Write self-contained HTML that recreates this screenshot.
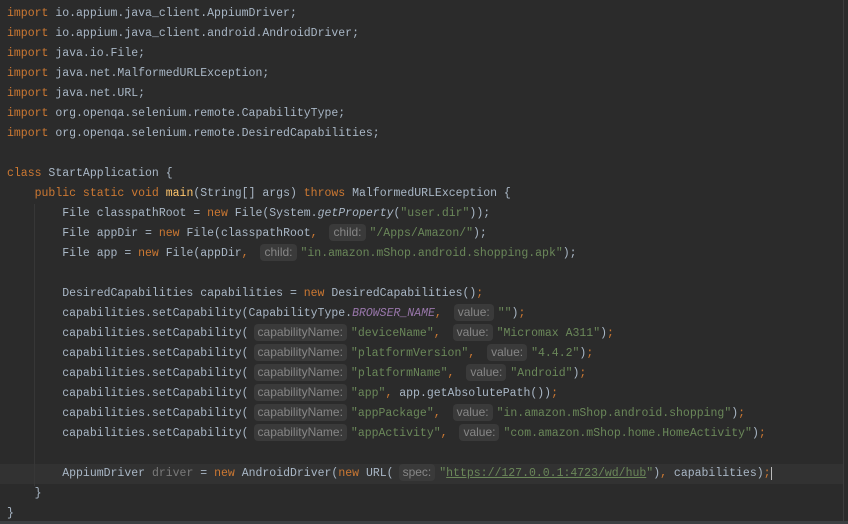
<!DOCTYPE html>
<html><head><style>
html,body{margin:0;padding:0;}
body{width:848px;height:524px;background:#2b2b2b;position:relative;overflow:hidden;font-family:"Liberation Mono",monospace;font-size:11.5px;color:#a9b7c6;}
.l{position:absolute;left:7px;height:20px;line-height:20px;white-space:pre;margin-top:1px}
.k{color:#cc7832}.s{color:#6a8759}.m{color:#ffc66d}.f{color:#9876aa;font-style:italic}.i{font-style:italic}
.h{display:inline-block;background:#3a3a3a;color:#868686;font-family:"Liberation Sans",sans-serif;font-size:12px;line-height:17px;padding:0 4px;border-radius:4px;margin:0 4px 0 5px;vertical-align:0px}
.g{color:#7a7a7a}
.cur{position:absolute;left:0;top:464px;width:843px;height:20px;background:#323232}
.guide{position:absolute;width:1px;background:#373737}
</style></head><body>
<div class="cur"></div>
<div class="guide" style="left:34px;top:204px;height:282px"></div>
<div class="guide" style="left:843px;top:0;height:524px;background:#3c3c3c"></div>
<div style="position:absolute;left:0;top:521px;width:848px;height:3px;background:#3c3f41"></div>
<div class="l" style="top:3px"><span class="k">import</span> io.appium.java_client.AppiumDriver;</div>
<div class="l" style="top:23px"><span class="k">import</span> io.appium.java_client.android.AndroidDriver;</div>
<div class="l" style="top:43px"><span class="k">import</span> java.io.File;</div>
<div class="l" style="top:63px"><span class="k">import</span> java.net.MalformedURLException;</div>
<div class="l" style="top:83px"><span class="k">import</span> java.net.URL;</div>
<div class="l" style="top:103px"><span class="k">import</span> org.openqa.selenium.remote.CapabilityType;</div>
<div class="l" style="top:123px"><span class="k">import</span> org.openqa.selenium.remote.DesiredCapabilities;</div>
<div class="l" style="top:163px"><span class="k">class</span> StartApplication {</div>
<div class="l" style="top:183px">    <span class="k">public static void</span> <span class="m">main</span>(String[] args) <span class="k">throws</span> MalformedURLException {</div>
<div class="l" style="top:203px">        File classpathRoot = <span class="k">new</span> File(System.<span class="i">getProperty</span>(<span class="s">"user.dir"</span>));</div>
<div class="l" style="top:223px">        File appDir = <span class="k">new</span> File(classpathRoot<span class="k">,</span> <span class="h">child:</span><span class="s">"/Apps/Amazon/"</span>);</div>
<div class="l" style="top:243px">        File app = <span class="k">new</span> File(appDir<span class="k">,</span> <span class="h">child:</span><span class="s">"in.amazon.mShop.android.shopping.apk"</span>);</div>
<div class="l" style="top:283px">        DesiredCapabilities capabilities = <span class="k">new</span> DesiredCapabilities()<span class="k">;</span></div>
<div class="l" style="top:303px">        capabilities.setCapability(CapabilityType.<span class="f">BROWSER_NAME</span><span class="k">,</span> <span class="h">value:</span><span class="s">""</span>)<span class="k">;</span></div>
<div class="l" style="top:323px">        capabilities.setCapability(<span class="h">capabilityName:</span><span class="s">"deviceName"</span><span class="k">,</span> <span class="h">value:</span><span class="s">"Micromax A311"</span>)<span class="k">;</span></div>
<div class="l" style="top:343px">        capabilities.setCapability(<span class="h">capabilityName:</span><span class="s">"platformVersion"</span><span class="k">,</span> <span class="h">value:</span><span class="s">"4.4.2"</span>)<span class="k">;</span></div>
<div class="l" style="top:363px">        capabilities.setCapability(<span class="h">capabilityName:</span><span class="s">"platformName"</span><span class="k">,</span> <span class="h">value:</span><span class="s">"Android"</span>)<span class="k">;</span></div>
<div class="l" style="top:383px">        capabilities.setCapability(<span class="h">capabilityName:</span><span class="s">"app"</span><span class="k">,</span> app.getAbsolutePath())<span class="k">;</span></div>
<div class="l" style="top:403px">        capabilities.setCapability(<span class="h">capabilityName:</span><span class="s">"appPackage"</span><span class="k">,</span> <span class="h">value:</span><span class="s">"in.amazon.mShop.android.shopping"</span>)<span class="k">;</span></div>
<div class="l" style="top:423px">        capabilities.setCapability(<span class="h">capabilityName:</span><span class="s">"appActivity"</span><span class="k">,</span> <span class="h">value:</span><span class="s">"com.amazon.mShop.home.HomeActivity"</span>)<span class="k">;</span></div>
<div class="l" style="top:463px">        AppiumDriver <span class="g">driver</span> = <span class="k">new</span> AndroidDriver(<span class="k">new</span> URL(<span class="h">spec:</span><span class="s">"<u>https://127.0.0.1:4723/wd/hub</u>"</span>)<span class="k">,</span> capabilities)<span class="k">;</span><span style="border-left:1px solid #bbb"></span></div>
<div class="l" style="top:483px">    }</div>
<div class="l" style="top:503px">}</div>
</body></html>
